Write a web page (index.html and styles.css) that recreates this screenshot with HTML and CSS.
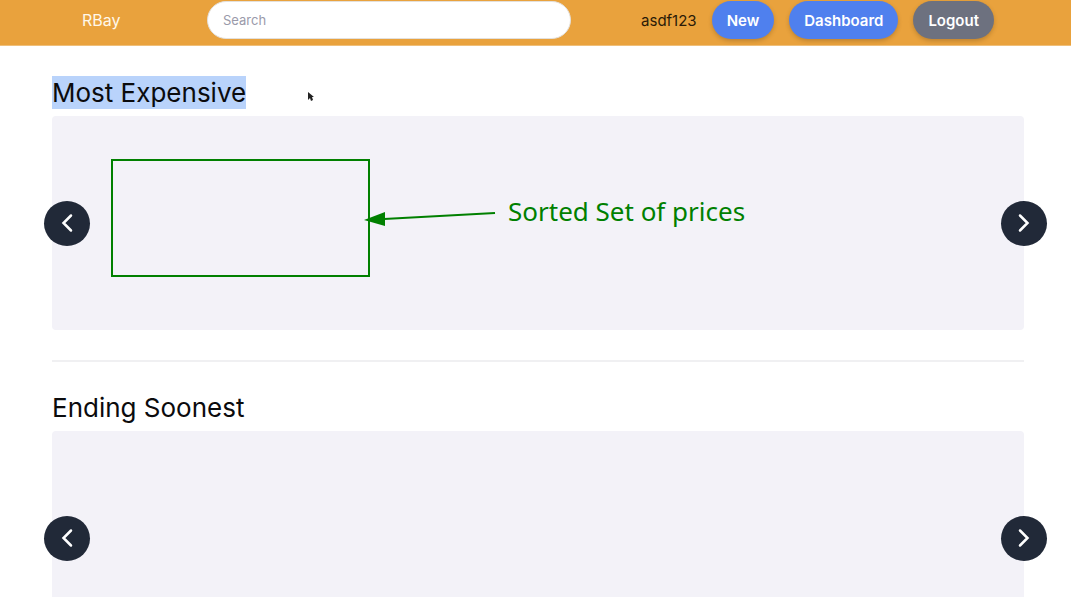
FILE: index.html
```html
<!DOCTYPE html>
<html lang="en">
<head>
<meta charset="utf-8">
<meta name="viewport" content="width=device-width, initial-scale=1">
<title>RBay</title>
<link rel="stylesheet" href="styles.css">
</head>
<body>
<header class="navbar">
  <a class="brand" href="#">RBay</a>
  <input class="search" type="search" placeholder="Search" aria-label="Search">
  <nav class="account">
    <a class="username" href="#">asdf123</a>
    <button class="button" type="button">New</button>
    <button class="button" type="button">Dashboard</button>
    <button class="button button-muted" type="button">Logout</button>
  </nav>
</header>
<main class="content">
  <section class="listing">
    <h2 class="title"><mark class="selected">Most Expensive</mark></h2>
    <div class="carousel">
      <button class="arrow" type="button" aria-label="Previous"><svg class="chevron" viewBox="0 0 24 24"><path d="M16 4.500 8.500 12l7.500 7.500"/></svg></button>
      <button class="arrow" type="button" aria-label="Next"><svg class="chevron" viewBox="0 0 24 24"><path d="m8 4.500 7.500 7.500L8 19.500"/></svg></button>
      <div class="note-box"></div>
      <svg class="note-arrow" viewBox="0 0 134 22" aria-hidden="true"><path class="note-line" d="M20 11 131 5"/><path class="note-head" d="M0 12 21 4v14Z"/></svg>
      <p class="note-text">Sorted Set of prices</p>
    </div>
    <svg class="pointer" viewBox="0 0 8 12" aria-hidden="true"><path d="M1 1v8l2-2 1 3 2-1-1-3h2Z"/></svg>
  </section>
  <hr class="divider">
  <section class="listing">
    <h2 class="title">Ending Soonest</h2>
    <div class="carousel">
      <button class="arrow" type="button" aria-label="Previous"><svg class="chevron" viewBox="0 0 24 24"><path d="M16 4.500 8.500 12l7.500 7.500"/></svg></button>
      <button class="arrow" type="button" aria-label="Next"><svg class="chevron" viewBox="0 0 24 24"><path d="m8 4.500 7.500 7.500L8 19.500"/></svg></button>
    </div>
  </section>
</main>
</body>
</html>
```

FILE: styles.css
```css
* { box-sizing: border-box; }

body {
  margin: 0;
  background: #fff;
  color: #0b0b0d;
  font-family: Inter, "Liberation Sans", sans-serif;
}

.navbar {
  display: flex;
  align-items: center;
  padding: 1px 77px 6px 82px;
  background: #e9a23d;
  border-bottom: 1px solid #efbf7a;
}

.brand {
  flex: 0 0 125px;
  color: #fff8ea;
  font-size: 16px;
  text-decoration: none;
}

.search {
  flex: 0 1 364px;
  min-width: 0;
  height: 38px;
  padding: 0 15px;
  border: 1px solid #e3e0dc;
  border-radius: 20px;
  background: #fff;
  font: 13px Inter, sans-serif;
  appearance: none;
}

.search::placeholder { color: #9a9aaa; }

.account {
  display: flex;
  align-items: center;
  gap: 15px;
  margin-left: auto;
}

.username {
  color: #2b1b08;
  font-size: 15px;
  text-decoration: none;
}

.button {
  height: 38px;
  padding: 0 15px;
  border: 0;
  border-radius: 20px;
  background: #4f80ee;
  color: #fff;
  font: 600 15px Inter, sans-serif;
  box-shadow: 0 2px 4px rgb(90 60 20 / 30%);
}

.button-muted { background: #6d717f; }

.content { padding: 30px 47px 0 52px; }

.listing { position: relative; }

.title {
  margin: 0 0 7px;
  font-size: 26px;
  font-weight: 400;
  line-height: 33px;
}

.selected {
  display: inline-block;
  background: #b9d3fb;
  color: inherit;
}

.carousel {
  position: relative;
  display: flex;
  align-items: center;
  justify-content: space-between;
  height: 214px;
  margin: 0;
  border-radius: 4px;
  background: #f3f2f8;
}

.arrow {
  display: grid;
  place-items: center;
  width: 46px;
  height: 45px;
  margin: 0 -8px;
  padding: 0;
  border: 0;
  border-radius: 50%;
  background: #212938;
}

.arrow + .arrow { margin-right: -23px; }

.chevron {
  width: 24px;
  height: 24px;
  fill: none;
  stroke: #fff;
  stroke-width: 2.5;
  stroke-linecap: round;
}

.divider {
  height: 2px;
  margin: 30px 0 29px;
  border: 0;
  background: #f0f0f2;
}

.note-box {
  position: absolute;
  top: 43px;
  left: 59px;
  width: 259px;
  height: 118px;
  border: 2px solid #008000;
}

.note-arrow {
  position: absolute;
  top: 92px;
  left: 312px;
  width: 134px;
  height: 22px;
}

.note-line {
  stroke: #008000;
  stroke-width: 2;
}

.note-head { fill: #008000; }

.note-text {
  position: absolute;
  top: 79px;
  left: 456px;
  margin: 0;
  color: #008000;
  font: 400 26px/32px "Noto Sans", sans-serif;
  white-space: nowrap;
}

.pointer {
  position: absolute;
  top: 15px;
  left: 255px;
  width: 8px;
  height: 12px;
  fill: #222;
}
```
